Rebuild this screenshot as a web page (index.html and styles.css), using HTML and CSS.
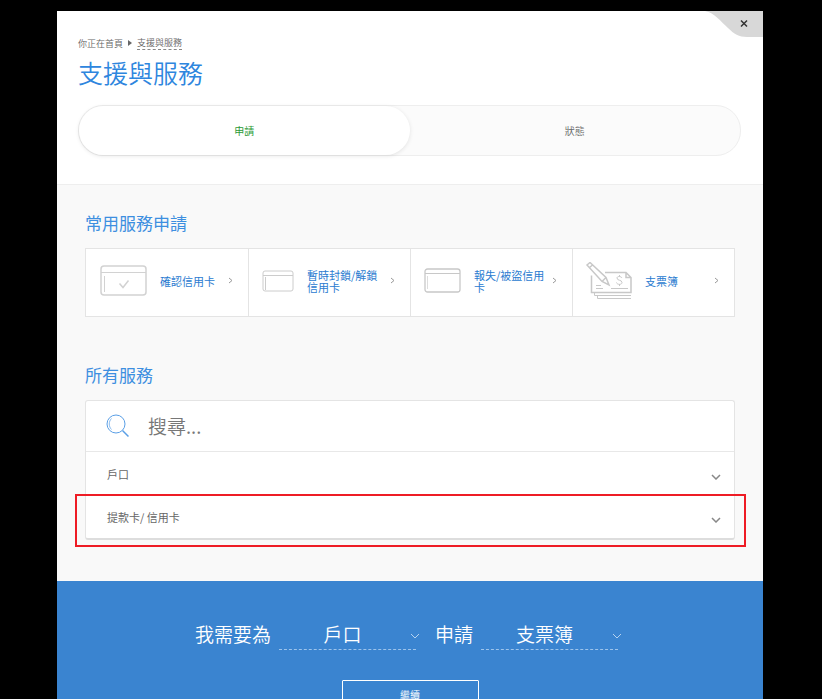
FILE: index.html
```html
<!DOCTYPE html>
<html lang="zh-Hant">
<head>
  <meta charset="UTF-8" />
  <meta name="viewport" content="width=device-width, initial-scale=1.0" />
  <title>支援與服務</title>
  <link rel="stylesheet" href="styles.css">
</head>
<body>
  <div class="panel">
    <button class="close" type="button" aria-label="關閉">
      <svg class="close-shape" viewBox="0 0 58 26"><path d="M0 0C10 2 15 10 23 17C29 23 34 26 42 26H58V0Z" fill="#d8d8d8"/><path d="M36 9.500l6 6M42 9.500l-6 6" stroke="#333" stroke-width="1.500"/></svg>
    </button>
    <header class="top">
      <nav class="breadcrumb">
        <span>你正在首頁</span>
        <svg width="4" height="6" viewBox="0 0 4 6"><path d="M0 0l4 3-4 3z" fill="#666"/></svg>
        <a href="#">支援與服務</a>
      </nav>
      <h1>支援與服務</h1>
      <div class="tabs">
        <button class="tab active" type="button">申請</button>
        <button class="tab" type="button">狀態</button>
      </div>
    </header>

    <main class="content">
      <h2>常用服務申請</h2>
      <div class="cards">
        <a class="card" href="#">
          <svg width="47" height="31" viewBox="0 0 47 31" fill="none" stroke="#d2d2d2"><rect x="1" y="1" width="45" height="29" rx="3" stroke-width="1.500"/><path d="M1 7.500h45M4.500 11v16"/><path d="M19.500 18.500l3.500 4 5.500-7" stroke-width="1.500"/></svg>
          <span class="card-text">確認信用卡</span>
          <svg class="arrow" width="5" height="7" viewBox="0 0 5 7"><path d="M1 1l3 2.500-3 2.500"/></svg>
        </a>
        <a class="card" href="#">
          <svg width="32" height="22" viewBox="0 0 32 22" fill="none" stroke="#ccc"><rect x="1" y="1" width="30" height="20" rx="2"/><path d="M1 5.500h30M3.500 7v13"/></svg>
          <span class="card-text">暫時封鎖/解鎖信用卡</span>
          <svg class="arrow" width="5" height="7" viewBox="0 0 5 7"><path d="M1 1l3 2.500-3 2.500"/></svg>
        </a>
        <a class="card" href="#">
          <svg width="37" height="25" viewBox="0 0 37 25" fill="none" stroke="#c8c8c8"><rect x="1" y="1" width="35" height="23" rx="2.500" stroke-width="1.300"/><path d="M1 5.500h35"/><path d="M3.500 8v13" stroke="#ddd"/></svg>
          <span class="card-text">報失/被盜信用卡</span>
          <svg class="arrow" width="5" height="7" viewBox="0 0 5 7"><path d="M1 1l3 2.500-3 2.500"/></svg>
        </a>
        <a class="card" href="#">
          <svg width="46" height="38" viewBox="0 0 46 38" fill="none" stroke="#c8c8c8"><path d="M19 10.500h21l5 5v15H5.500v-17M40 10.500v5h5" stroke-width="1.500"/><path d="M8.500 31v2.500H45M11.500 34v2.500H45M10 23.500h5M10 26.500h7M25 26.500h17"/><path d="M1 3l3-2.500 16 15 3 7.500-7-3.500L1 3zM3.500 5.500L6.500 3M16 19.500l4-4" stroke-width="1.500"/><path d="M36 16c-1-2-5-2-5 0 0 3 5 1.500 5 4.500 0 2.500-5 2.500-5.500 0M33.500 13v1.500M33.500 22v2"/></svg>
          <span class="card-text">支票簿</span>
          <svg class="arrow" width="5" height="7" viewBox="0 0 5 7"><path d="M1 1l3 2.500-3 2.500"/></svg>
        </a>
      </div>

      <h2>所有服務</h2>
      <div class="services">
        <label class="search">
          <svg width="24" height="24" viewBox="0 0 24 24" fill="none" stroke="#5a9fe6"><circle cx="10" cy="10" r="9"/><path d="M5.500 4.500c-3 3-3 8 0 11" stroke-width=".7"/><path d="M16.500 16.500l6 6" stroke-width="1.500"/></svg>
          <input type="text" placeholder="搜尋..." aria-label="搜尋">
        </label>
        <button class="service" type="button">
          <span>戶口</span>
          <svg width="10" height="6" viewBox="0 0 10 6"><path d="M1 1l4 4 4-4"/></svg>
        </button>
        <button class="service marked" type="button">
          <span>提款卡/ 信用卡</span>
          <svg width="10" height="6" viewBox="0 0 10 6"><path d="M1 1l4 4 4-4"/></svg>
        </button>
      </div>
    </main>

    <form class="request">
      <div class="sentence">
        <label for="product">我需要為</label>
        <div class="pick">
          <select id="product"><option>戶口</option></select>
          <svg width="10" height="6" viewBox="0 0 10 6"><path d="M1 1l4 4 4-4"/></svg>
        </div>
        <label for="service">申請</label>
        <div class="pick">
          <select id="service"><option>支票簿</option></select>
          <svg width="10" height="6" viewBox="0 0 10 6"><path d="M1 1l4 4 4-4"/></svg>
        </div>
      </div>
      <button class="continue" type="button">繼續</button>
    </form>
  </div>
</body>
</html>
```

FILE: styles.css
```css
* {
  box-sizing: border-box;
}
body {
  margin: 0;
  padding: 11px 59px 0 57px;
  height: 100vh;
  overflow: hidden;
  background: #000;
  color: #666;
  font-family: "Noto Sans CJK TC", sans-serif;
  font-weight: 350;
}
button, input, select {
  font: inherit;
  color: inherit;
  border: none;
  background: none;
  padding: 0;
}
svg {
  flex: none;
  display: block;
}
a {
  text-decoration: none;
  color: inherit;
}
.panel {
  position: relative;
  background: #f9f9f9;
}
.close {
  position: absolute;
  top: 0;
  right: 0;
  cursor: pointer;
}
.close-shape {
  width: 58px;
  height: 26px;
}
.top {
  background: #fff;
  padding: 25px 22px 28px 21px;
  border-bottom: 1px solid #eee;
}
.breadcrumb {
  display: flex;
  align-items: center;
  gap: 5px;
  font-size: 9px;
  line-height: 13px;
}
.breadcrumb a {
  border-bottom: 1px dashed #888;
}
h1 {
  margin: 4px 0 14px;
  font-size: 25px;
  line-height: 37px;
  font-weight: 350;
  color: #2e86de;
}
.tabs {
  display: flex;
  border: 1px solid #eee;
  border-radius: 25px;
  background: #fbfbfb;
}
.tab {
  flex: 1;
  height: 49px;
  font-size: 10px;
  border-radius: 25px;
  cursor: pointer;
}
.tab.active {
  background: #fff;
  color: #2b9a35;
  font-weight: 400;
  box-shadow: 0 1px 4px rgba(0, 0, 0, 0.1);
}
.content {
  padding: 26px 28px 41px;
}
h2 {
  margin: 0 0 13px;
  font-size: 17px;
  line-height: 24px;
  font-weight: 400;
  color: #3d8fe0;
}
.cards {
  display: grid;
  grid-template-columns: repeat(4, 1fr);
  margin-bottom: 46px;
  background: #fff;
  border: 1px solid #e4e4e4;
}
.card {
  display: flex;
  align-items: center;
  height: 67px;
  padding: 0 15px 4px 14px;
  color: #2a7bd0;
  font-size: 11px;
  line-height: 12px;
  font-weight: 400;
}
.card + .card {
  padding-left: 13px;
  border-left: 1px solid #e4e4e4;
}
.card-text {
  flex: 1;
  margin: 0 4px 0 13px;
}
.arrow {
  fill: none;
  stroke: #999;
}
.services {
  background: #fff;
  border: 1px solid #e4e4e4;
  border-bottom: 2px solid #ddd;
  border-radius: 3px;
}
.search {
  display: flex;
  align-items: center;
  gap: 18px;
  height: 51px;
  padding: 0 20px;
  border-bottom: 1px solid #e8e8e8;
}
.search input {
  flex: 1;
  font-family: "Liberation Sans Narrow", "Noto Sans CJK TC", sans-serif;
  font-size: 19px;
  line-height: 28px;
  outline: none;
}
.search input::placeholder {
  color: #777;
  opacity: 1;
}
.service {
  position: relative;
  display: flex;
  align-items: center;
  justify-content: space-between;
  width: 100%;
  height: 43px;
  padding: 0 13px 0 21px;
  font-size: 11px;
  font-weight: 400;
  cursor: pointer;
}
.service svg {
  margin-top: 6px;
  fill: none;
  stroke: #888;
  stroke-width: 1.5px;
}
/* callout frame round the row */
.marked::after {
  content: "";
  position: absolute;
  inset: -1px -12px -9px -11px;
  border: 2px solid #ee1c25;
}
.request {
  display: flex;
  flex-direction: column;
  align-items: center;
  padding: 38px 20px 30px;
  background: #3a84d0;
  color: #fff;
}
.sentence {
  display: flex;
  font-size: 19px;
  line-height: 30px;
  margin-right: 7px;
}
.pick {
  position: relative;
  width: 137px;
  margin: 0 19px 0 8px;
  border-bottom: 1px dashed #9dc4ec;
}
.pick:last-child {
  margin-right: 0;
}
.pick select {
  appearance: none;
  width: 100%;
  height: 30px;
  padding-right: 10px;
  text-align: center;
  text-align-last: center;
}
.pick svg {
  position: absolute;
  right: -4px;
  top: 14px;
  fill: none;
  stroke: #b5d2f0;
  pointer-events: none;
}
.continue {
  width: 137px;
  height: 29px;
  margin-top: 30px;
  border: 1px solid #fff;
  border-radius: 1px;
  font-size: 10px;
  cursor: pointer;
}
```
